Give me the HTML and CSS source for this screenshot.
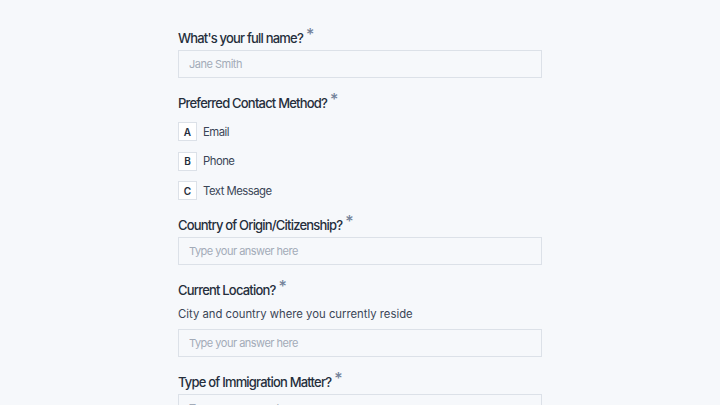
FILE: index.html
```html
<!DOCTYPE html>
<html lang="en">
<head>
  <meta charset="UTF-8">
  <meta name="viewport" content="width=device-width, initial-scale=1.0">
  <title>Immigration Intake Form</title>
  <link rel="stylesheet" href="styles.css">
</head>
<body>
  <form class="form">
    <div class="field">
      <label class="label" for="fullName">What's your full name?<span class="req">*</span></label>
      <input class="input" type="text" id="fullName" placeholder="Jane Smith">
    </div>

    <div class="field field-choices">
      <p class="label">Preferred Contact Method?<span class="req">*</span></p>
      <ul class="choices">
        <li class="choice"><span class="key">A</span>Email</li>
        <li class="choice"><span class="key">B</span>Phone</li>
        <li class="choice"><span class="key">C</span>Text Message</li>
      </ul>
    </div>

    <div class="field">
      <label class="label" for="country">Country of Origin/Citizenship?<span class="req">*</span></label>
      <input class="input" type="text" id="country" placeholder="Type your answer here">
    </div>

    <div class="field">
      <label class="label" for="location">Current Location?<span class="req">*</span></label>
      <p class="hint">City and country where you currently reside</p>
      <input class="input" type="text" id="location" placeholder="Type your answer here">
    </div>

    <div class="field">
      <label class="label" for="matter">Type of Immigration Matter?<span class="req">*</span></label>
      <input class="input" type="text" id="matter" placeholder="Type your answer here">
    </div>
  </form>
</body>
</html>
```

FILE: styles.css
```css
/* === Colours === */
:root {
  --bg:          #F6F8FB;
  --text:        #252E3B;
  --text-soft:   #3A4556;
  --border:      #DCE1E8;
  --placeholder: #A3ABB8;
  --req:         #74839A;
}

* {
  box-sizing: border-box;
  margin: 0;
  padding: 0;
}
body {
  font-family: Inter, "Noto Sans", Arial, sans-serif;
  background: var(--bg);
  color: var(--text);
}

/* === Form column === */
.form {
  width: 364px;
  margin: 0 auto;
  padding-top: 29px;
  display: flex;
  flex-direction: column;
  gap: 16px;
}

.field {
  display: flex;
  flex-direction: column;
}

.label {
  font-size: 13px;
  line-height: 18px;
  font-weight: 500;
  letter-spacing: -0.8px;
  color: var(--text);
  margin-bottom: 3px;
}
.req {
  color: var(--req);
  font-size: 16px;
  line-height: 0;
  margin-left: 3px;
  position: relative;
  top: -3px;
}

.hint {
  font-size: 11.3px;
  line-height: 16px;
  color: var(--text-soft);
  margin: 4px 0 7px;
}

.input {
  height: 28px;
  width: 100%;
  padding: 0 10px;
  border: 1px solid var(--border);
  background: var(--bg);
  font-family: inherit;
  font-size: 11px;
  letter-spacing: -0.5px;
  color: var(--text);
  outline: none;
}
.input::placeholder {
  color: var(--placeholder);
}

/* === Choices === */
.field-choices .label {
  margin-bottom: 10px;
}
.choices {
  list-style: none;
  display: flex;
  flex-direction: column;
  gap: 10.5px;
}
.choice {
  display: flex;
  align-items: center;
  gap: 6px;
  font-size: 11.3px;
  letter-spacing: -0.5px;
  color: var(--text-soft);
}
.key {
  width: 19px;
  height: 19px;
  display: flex;
  align-items: center;
  justify-content: center;
  border: 1px solid var(--border);
  background: #FFF;
  font-size: 10px;
  font-weight: 600;
  letter-spacing: 0;
  color: var(--text);
}
```
